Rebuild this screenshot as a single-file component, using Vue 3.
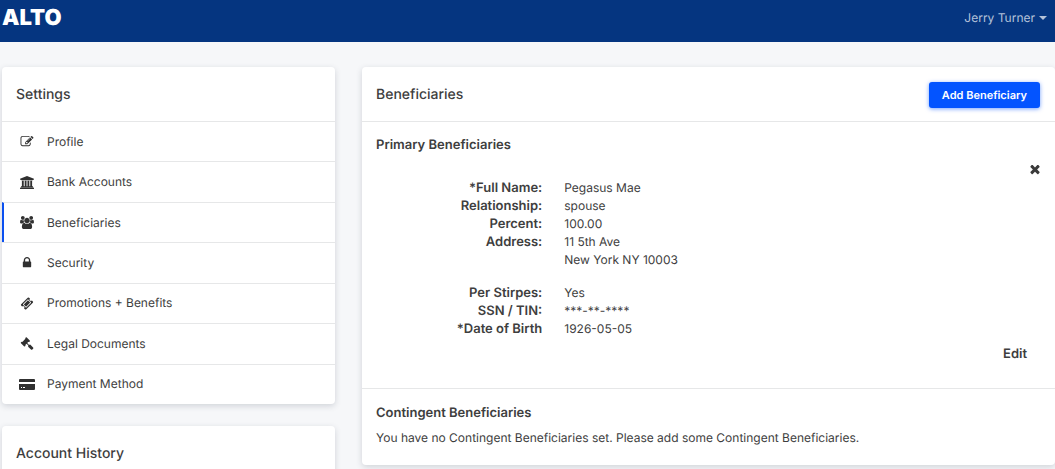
<script setup>
const menu = [
  {
    label: 'Profile',
    box: '0 0 1792 1792',
    path: 'M888 1184l116-116-152-152-116 116v56h96v96h56zm440-720q-16-16-33 1l-350 350q-17 17-1 33t33-1l350-350q17-17 1-33zm80 594v190q0 119-84.5 203.5t-203.5 84.5h-832q-119 0-203.5-84.5t-84.5-203.5v-832q0-119 84.5-203.5t203.5-84.5h832q63 0 117 25 15 7 18 23 3 17-9 29l-49 49q-14 14-32 8-23-6-45-6h-832q-66 0-113 47t-47 113v832q0 66 47 113t113 47h832q66 0 113-47t47-113v-126q0-13 9-22l64-64q15-15 35-7t20 29zm-96-738l288 288-672 672h-288v-288zm444 132l-92 92-288-288 92-92q28-28 68-28t68 28l152 152q28 28 28 68t-28 68z',
  },
  {
    label: 'Bank Accounts',
    box: '0 0 1920 1792',
    path: 'M960 0l960 384v128h-128q0 26-20.5 45t-48.5 19h-1526q-28 0-48.5-19t-20.5-45h-128v-128zM256 640h256v768h128v-768h256v768h128v-768h256v768h128v-768h256v768h59q28 0 48.5 19t20.5 45v64h-1664v-64q0-26 20.5-45t48.5-19h59v-768zM1851 1600q28 0 48.5 19t20.5 45v128h-1920v-128q0-26 20.5-45t48.5-19h1782z',
  },
  {
    label: 'Beneficiaries',
    active: true,
    box: '0 0 1920 1792',
    path: 'M593 896q-162 5-265 128h-134q-82 0-138-40.5t-56-118.5q0-353 124-353 6 0 43.5 21t97.5 42.5 119 21.5q67 0 133-23-5 37-5 66 0 139 81 256zm1071 637q0 120-73 189.5t-194 69.5h-874q-121 0-194-69.5t-73-189.5q0-53 3.5-103.5t14-109 26.5-108.5 43-97.5 62-81 85.5-53.5 111.5-20q10 0 43 21.5t73 48 107 48 135 21.5 135-21.5 107-48 73-48 43-21.5q61 0 111.5 20t85.5 53.5 62 81 43 97.5 26.5 108.5 14 109 3.5 103.5zm-1024-1277q0 106-75 181t-181 75-181-75-75-181 75-181 181-75 181 75 75 181zm704 384q0 159-112.5 271.5t-271.5 112.5-271.5-112.5-112.5-271.5 112.5-271.5 271.5-112.5 271.5 112.5 112.5 271.5zm576 225q0 78-56 118.5t-138 40.5h-134q-103-123-265-128 81-117 81-256 0-29-5-66 66 23 133 23 59 0 119-21.5t97.5-42.5 43.5-21q124 0 124 353zm-128-609q0 106-75 181t-181 75-181-75-75-181 75-181 181-75 181 75 75 181z',
  },
  {
    label: 'Security',
    box: '0 0 1792 1792',
    path: 'M640 768h512v-192q0-106-75-181t-181-75-181 75-75 181v192zm832 96v576q0 40-28 68t-68 28h-960q-40 0-68-28t-28-68v-576q0-40 28-68t68-28h32v-192q0-184 132-316t316-132 316 132 132 316v192h32q40 0 68 28t28 68z',
  },
  {
    label: 'Promotions + Benefits',
    box: '0 0 1792 1792',
    path: 'M1024 452l316 316-572 572-316-316zm-211 979l618-618q19-19 19-45t-19-45l-362-362q-18-18-45-18t-45 18l-618 618q-19 19-19 45t19 45l362 362q18 18 45 18t45-18zm889-637l-907 908q-37 37-90.5 37t-90.5-37l-126-126q56-56 56-136t-56-136-136-56-136 56l-125-126q-37-37-37-90.5t37-90.5l907-906q37-37 90.5-37t90.5 37l125 125q-56 56-56 136t56 136 136 56 136-56l126 125q37 37 37 90.5t-37 90.5z',
  },
  {
    label: 'Legal Documents',
    box: '0 0 1792 1792',
    path: 'M1771 1536q0 53-37 90l-107 108q-39 37-91 37-53 0-90-37l-363-364q-38-36-38-90 0-53 43-96l-256-256-126 126q-14 14-34 14t-34-14q2 2 12.5 12t12.5 13 10 11.5 10 13.5 6 13.5 5.5 16.5 1.5 18q0 38-28 68-3 3-16.5 18t-19 20.5-18.5 16.5-22 15.5-22 9-26 4.5q-40 0-68-28l-408-408q-28-28-28-68 0-13 4.5-26t9-22 15.5-22 16.5-18.5 20.5-19 18-16.5q30-28 68-28 10 0 18 1.5t16.5 5.5 13.5 6 13.5 10 11.5 10 13 12.5 12 12.5q-14-14-14-34t14-34l348-348q14-14 34-14t34 14q-2-2-12.5-12t-12.5-13-10-11.5-10-13.5-6-13.5-5.5-16.5-1.5-18q0-38 28-68 3-3 16.5-18t19-20.5 18.5-16.5 22-15.5 22-9 26-4.5q40 0 68 28l408 408q28 28 28 68 0 13-4.5 26t-9 22-15.5 22-16.5 18.5-20.5 19-18 16.5q-30 28-68 28-10 0-18-1.5t-16.5-5.5-13.5-6-13.5-10-11.5-10-13-12.5-12-12.5q14 14 14 34t-14 34l-126 126 256 256q43-43 96-43 52 0 91 37l363 363q37 39 37 91z',
  },
  {
    label: 'Payment Method',
    wide: true,
    box: '0 0 16 11',
    path: 'M1 0h14q1 0 1 1v2H0V1q0-1 1-1zM0 5h16v5q0 1-1 1H1q-1 0-1-1zM2 8v1h1V8zM4 8v1h2V8z',
  },
]

const details = [
  [
    { label: '*Full Name:', lines: ['Pegasus Mae'] },
    { label: 'Relationship:', lines: ['spouse'] },
    { label: 'Percent:', lines: ['100.00'] },
    { label: 'Address:', lines: ['11 5th Ave', 'New York NY 10003'] },
  ],
  [
    { label: 'Per Stirpes:', lines: ['Yes'] },
    { label: 'SSN / TIN:', lines: ['***-**-****'] },
    { label: '*Date of Birth', lines: ['1926-05-05'] },
  ],
]
</script>

<template>
  <div class="page">
    <header class="topbar">
      <a class="brand" href="#">ALTO</a>
      <button class="user" type="button">
        Jerry Turner
        <svg class="caret" viewBox="0 0 8 4" aria-hidden="true"><path d="M0 0h8L4 4z" /></svg>
      </button>
    </header>

    <main class="layout">
      <aside class="side">
        <section class="card">
          <h2 class="card-head">Settings</h2>
          <nav class="menu" aria-label="Settings">
            <a v-for="item in menu" :key="item.label" href="#" class="item" :class="{ active: item.active }">
              <span class="slot">
                <svg class="icon" :class="{ wide: item.wide }" :viewBox="item.box" aria-hidden="true">
                  <path :d="item.path" fill-rule="evenodd" />
                </svg>
              </span>
              {{ item.label }}
            </a>
          </nav>
        </section>
        <section class="card">
          <h2 class="card-head">Account History</h2>
        </section>
      </aside>

      <section class="card content">
        <div class="card-head">
          <h2 class="title">Beneficiaries</h2>
          <button class="add" type="button">Add Beneficiary</button>
        </div>

        <div class="primary">
          <h3 class="subtitle">Primary Beneficiaries</h3>
          <div class="row-end">
            <button class="remove" type="button" aria-label="Remove beneficiary">
              <svg class="cross" viewBox="256 384 1280 1280" aria-hidden="true">
                <path d="M1490 1322q0 40-28 68l-136 136q-28 28-68 28t-68-28l-294-294-294 294q-28 28-68 28t-68-28l-136-136q-28-28-28-68t28-68l294-294-294-294q-28-28-28-68t28-68l136-136q28-28 68-28t68 28l294 294 294-294q28-28 68-28t68 28l136 136q28 28 28 68t-28 68l-294 294 294 294q28 28 28 68z" />
              </svg>
            </button>
          </div>
          <dl v-for="(group, i) in details" :key="i" class="details">
            <div v-for="field in group" :key="field.label" class="field">
              <dt>{{ field.label }}</dt>
              <dd><div v-for="line in field.lines" :key="line">{{ line }}</div></dd>
            </div>
          </dl>
          <div class="row-end">
            <button class="edit" type="button">Edit</button>
          </div>
        </div>

        <div class="contingent">
          <h3 class="subtitle">Contingent Beneficiaries</h3>
          <p class="note">You have no Contingent Beneficiaries set. Please add some Contingent Beneficiaries.</p>
        </div>
      </section>
    </main>
  </div>
</template>

<style>
body {
  background: #f6f7f9;
}
#app {
  overflow: hidden;
  height: 100vh;
}
</style>

<style scoped>
.page {
  font-family: Inter, "Liberation Sans", sans-serif;
  font-size: 12px;
  line-height: 18px;
  color: #3e3e3e;
  text-rendering: geometricPrecision;
}
.page *,
.page *::before {
  box-sizing: border-box;
}
button {
  font: inherit;
  text-rendering: inherit;
  border: 0;
  padding: 0;
  background: none;
  color: inherit;
  cursor: pointer;
}
h2,
h3,
p,
dl,
dd {
  margin: 0;
}
.topbar {
  display: flex;
  align-items: center;
  justify-content: space-between;
  height: 42px;
  padding: 0 8px 6px 2px;
  background: #053580;
}
.brand {
  color: #fff;
  font-size: 22px;
  line-height: 24px;
  font-weight: 900;
  text-decoration: none;
}
.user {
  display: flex;
  align-items: center;
  gap: 4px;
  color: #b4c2d9;
}
.caret {
  width: 8px;
  height: 4px;
  fill: currentColor;
}
.layout {
  display: grid;
  grid-template-columns: repeat(12, minmax(0, 1fr));
  column-gap: 27px;
  align-items: start;
  padding: 25px 0 0 2px;
}
.side {
  grid-column: span 4;
  display: grid;
  gap: 22px;
}
.content {
  grid-column: span 8;
}
.card {
  background: #fff;
  border-radius: 4px;
  box-shadow: 0 2px 6px rgba(40, 50, 70, 0.18);
}
.card-head {
  display: flex;
  align-items: center;
  justify-content: space-between;
  min-height: 54px;
  padding: 1px 15px 0 14px;
}
.card-head,
.title {
  font-size: 14px;
  font-weight: 500;
}
.menu {
  display: grid;
  grid-auto-rows: 1fr;
  min-height: 283px;
}
.item {
  display: flex;
  align-items: center;
  gap: 10px;
  padding: 0 15px;
  border-top: 1px solid #e6e7e8;
  color: inherit;
  text-decoration: none;
}
.item.active {
  border-left: 2px solid #0b50f0;
  padding-left: 13px;
}
.slot {
  display: flex;
  justify-content: center;
  width: 20px;
}
.icon {
  width: 14px;
  height: 13px;
  fill: #303030;
}
.icon.wide {
  width: 16px;
  height: 11px;
}
.add {
  height: 26px;
  padding: 0 13px;
  border-radius: 3px;
  background: #0354ff;
  color: #fff;
  font-size: 11px;
  font-weight: 600;
  box-shadow: 0 1px 4px rgba(3, 84, 255, 0.55);
}
.primary,
.contingent {
  border-top: 1px solid #e6e7e8;
  padding: 14px;
}
.primary {
  padding-bottom: 25px;
}
.contingent {
  padding-top: 15px;
  padding-bottom: 18px;
}
.subtitle {
  font-size: 13px;
  font-weight: 600;
}
.row-end {
  display: flex;
  justify-content: flex-end;
}
.remove {
  display: flex;
  padding: 11px 1px 4px;
}
.cross {
  width: 10px;
  height: 10px;
  fill: #3a3a3a;
}
.details {
  margin-bottom: 15px;
}
.details + .row-end {
  margin-top: -8px;
}
.field {
  display: grid;
  grid-template-columns: 25% 1fr;
  column-gap: 22px;
}
dt {
  text-align: right;
  font-size: 13px;
  font-weight: 600;
}
.edit {
  margin-right: 14px;
  font-size: 13px;
  font-weight: 600;
}
.note {
  margin-top: 7px;
}
</style>
